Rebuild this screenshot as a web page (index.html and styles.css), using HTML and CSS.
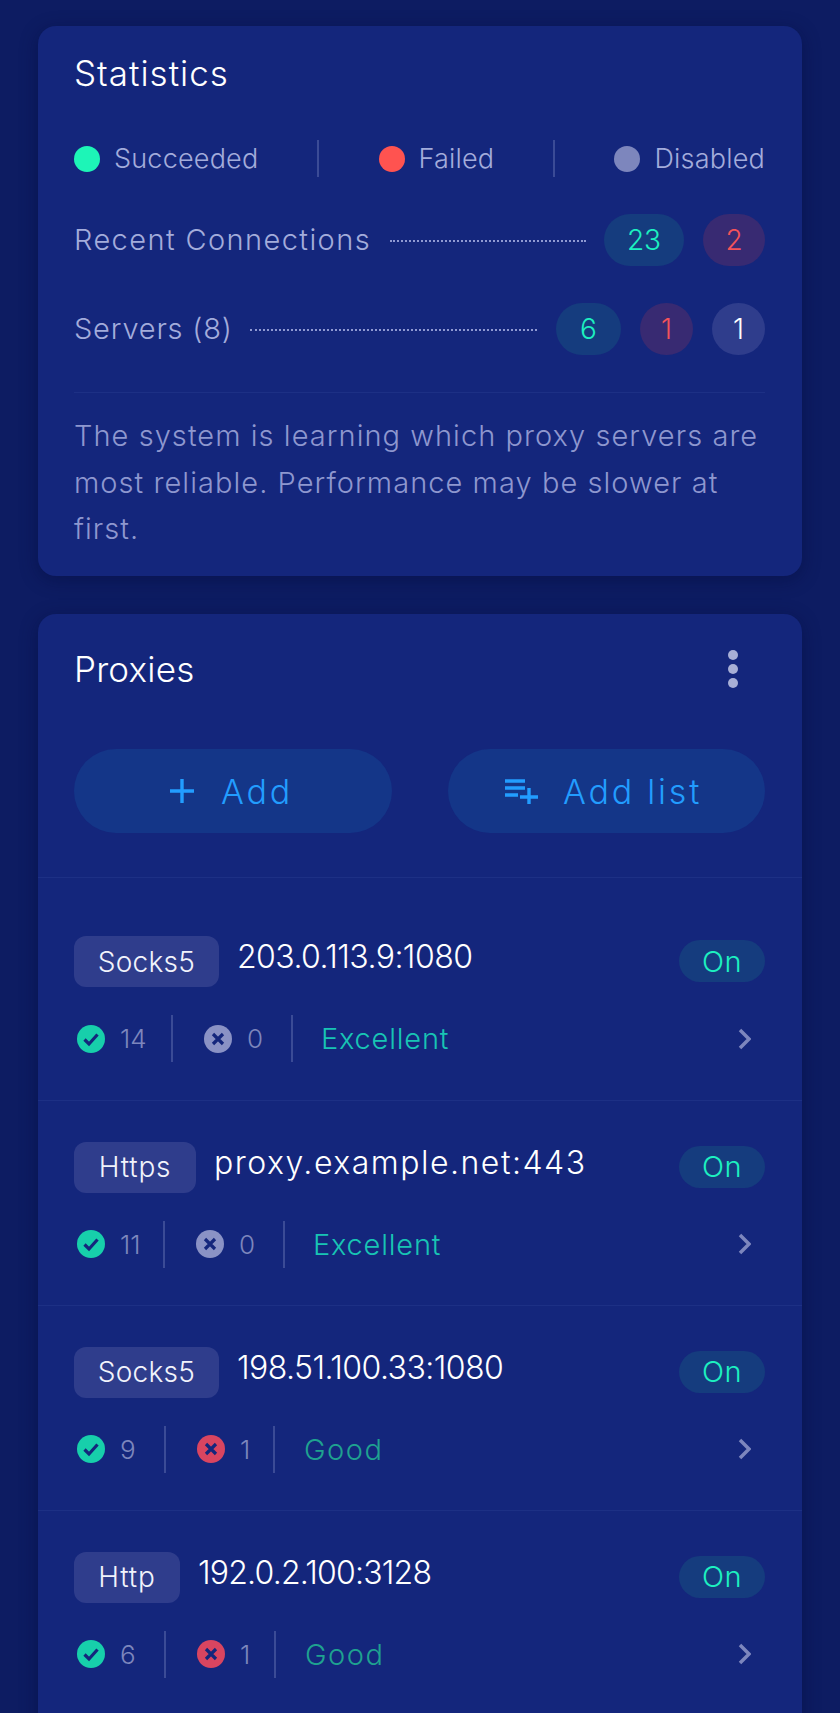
FILE: index.html
```html
<!DOCTYPE html>
<html lang="en">
<head>
<meta charset="utf-8">
<title>Proxies</title>
<link rel="stylesheet" href="styles.css">
</head>
<body>
<main class="page">
  <section class="card stats">
    <h2 class="title">Statistics</h2>
    <div class="legend">
      <span class="legend-item"><i class="dot dot-ok"></i>Succeeded</span>
      <span class="vsep"></span>
      <span class="legend-item"><i class="dot dot-fail"></i>Failed</span>
      <span class="vsep"></span>
      <span class="legend-item"><i class="dot dot-off"></i>Disabled</span>
    </div>
    <div class="stat-row stat-first">
      <span class="stat-label">Recent Connections</span>
      <span class="leader"></span>
      <span class="count count-ok wide">23</span>
      <span class="count count-fail">2</span>
    </div>
    <div class="stat-row stat-second">
      <span class="stat-label label-short">Servers (8)</span>
      <span class="leader"></span>
      <span class="count count-ok mid">6</span>
      <span class="count count-fail narrow">1</span>
      <span class="count count-off narrow">1</span>
    </div>
    <p class="note">The system is learning which proxy servers are most reliable. Performance may be slower at first.</p>
  </section>

  <section class="card proxies">
    <div class="proxies-head">
      <h2 class="title title-short">Proxies</h2>
      <svg class="kebab" width="10" height="38" viewBox="0 0 10 38"><circle cx="5" cy="5" r="5"/><circle cx="5" cy="19" r="5"/><circle cx="5" cy="33" r="5"/></svg>
    </div>
    <div class="actions">
      <button class="btn btn-add"><svg width="26" height="26" viewBox="0 0 26 26"><path d="M13 1v24M1 13h24"/></svg><span>Add</span></button>
      <button class="btn btn-list"><svg width="34" height="26" viewBox="0 0 34 26"><path d="M0 3h20M0 10h20M0 17h13M15 19h18M24 10v16"/></svg><span>Add list</span></button>
    </div>
    <ul class="list">
      <li class="proxy">
        <div class="proxy-top"><span class="type t-socks">Socks5</span><span class="addr">203.0.113.9:1080</span><span class="on">On</span></div>
        <div class="proxy-bottom">
          <svg class="ic" viewBox="0 0 28 28"><circle class="ok" cx="14" cy="14" r="14"/><path d="M7.5 14.5l4.5 4.5 8.5-9.5"/></svg><span class="num w-14">14</span><span class="vsep2"></span>
          <svg class="ic" viewBox="0 0 28 28"><circle class="off" cx="14" cy="14" r="14"/><path d="M9 9l10 10M19 9L9 19"/></svg><span class="num w-0">0</span><span class="vsep2"></span>
          <span class="rate excellent">Excellent</span><svg class="chev" viewBox="0 0 13 22"><path d="M2 2l9 9-9 9"/></svg>
        </div>
      </li>
      <li class="proxy">
        <div class="proxy-top"><span class="type t-https">Https</span><span class="addr addr-host">proxy.example.net:443</span><span class="on">On</span></div>
        <div class="proxy-bottom">
          <svg class="ic" viewBox="0 0 28 28"><circle class="ok" cx="14" cy="14" r="14"/><path d="M7.5 14.5l4.5 4.5 8.5-9.5"/></svg><span class="num w-11">11</span><span class="vsep2"></span>
          <svg class="ic" viewBox="0 0 28 28"><circle class="off" cx="14" cy="14" r="14"/><path d="M9 9l10 10M19 9L9 19"/></svg><span class="num w-0">0</span><span class="vsep2"></span>
          <span class="rate excellent">Excellent</span><svg class="chev" viewBox="0 0 13 22"><path d="M2 2l9 9-9 9"/></svg>
        </div>
      </li>
      <li class="proxy">
        <div class="proxy-top"><span class="type t-socks">Socks5</span><span class="addr">198.51.100.33:1080</span><span class="on">On</span></div>
        <div class="proxy-bottom">
          <svg class="ic" viewBox="0 0 28 28"><circle class="ok" cx="14" cy="14" r="14"/><path d="M7.5 14.5l4.5 4.5 8.5-9.5"/></svg><span class="num w-9">9</span><span class="vsep2"></span>
          <svg class="ic" viewBox="0 0 28 28"><circle class="bad" cx="14" cy="14" r="14"/><path d="M9 9l10 10M19 9L9 19"/></svg><span class="num w-1">1</span><span class="vsep2"></span>
          <span class="rate good">Good</span><svg class="chev" viewBox="0 0 13 22"><path d="M2 2l9 9-9 9"/></svg>
        </div>
      </li>
      <li class="proxy">
        <div class="proxy-top"><span class="type t-http">Http</span><span class="addr addr-tight">192.0.2.100:3128</span><span class="on">On</span></div>
        <div class="proxy-bottom">
          <svg class="ic" viewBox="0 0 28 28"><circle class="ok" cx="14" cy="14" r="14"/><path d="M7.5 14.5l4.5 4.5 8.5-9.5"/></svg><span class="num w-9">6</span><span class="vsep2"></span>
          <svg class="ic" viewBox="0 0 28 28"><circle class="bad" cx="14" cy="14" r="14"/><path d="M9 9l10 10M19 9L9 19"/></svg><span class="num w-1b">1</span><span class="vsep2"></span>
          <span class="rate good">Good</span><svg class="chev" viewBox="0 0 13 22"><path d="M2 2l9 9-9 9"/></svg>
        </div>
      </li>
    </ul>
  </section>
</main>
</body>
</html>
```
FILE: styles.css
```css
* { box-sizing: border-box; }
html, body { margin: 0; height: 1713px; overflow: hidden; }
body {
  background: #0d1c62;
  font-family: Inter, "Liberation Sans", sans-serif;
  font-weight: 300;
}
.page { padding: 26px 38px 0; display: flex; flex-direction: column; gap: 38px; }
.card {
  background: #14267c;
  border-radius: 18px;
  box-shadow: 0 4px 18px rgba(5, 12, 60, .45);
}
.stats { padding: 0 37px 23px 36px; }
.title { margin: 0; font-size: 35px; font-weight: 300; color: #fff; line-height: 46px; letter-spacing: 1px; }
.title-short { letter-spacing: .2px; }
.stats .title { padding-top: 24px; height: 70px; }
.legend { display: flex; justify-content: space-between; align-items: center; height: 37px; margin-top: 44px; font-size: 27px; color: #a3acdb; letter-spacing: .2px; }
.legend-item { display: flex; align-items: center; gap: 14px; }
.dot { width: 26px; height: 26px; border-radius: 50%; display: block; }
.dot-ok { background: #1df5b7; }
.dot-fail { background: #ff5350; }
.dot-off { background: #7d86bd; }
.vsep { width: 2px; height: 37px; background: #3b4b96; }
.stat-row { display: flex; align-items: center; height: 52px; gap: 19px; }
.stat-first { margin-top: 37px; }
.stat-second { margin-top: 37px; }
.stat-label { font-size: 29px; line-height: 50px; color: #a3acdb; white-space: nowrap; letter-spacing: 1.4px; }
.label-short { letter-spacing: .8px; margin-right: -2px; }
.leader { flex: 1; border-top: 2px dotted #8f99d2; margin: 2px 0 0; }
.count { height: 52px; border-radius: 26px; display: flex; align-items: center; justify-content: center; font-size: 28px; width: 62px; flex: none; }
.wide { width: 80px; margin-left: -1px; }
.mid { width: 65px; }
.narrow { width: 53px; }
.count-ok { background: #153c7e; color: #1df0c0; }
.count-fail { background: #382a72; color: #f3535a; }
.count-off { background: #2f3d8c; color: #fff; }
.note { margin: 37px 0 0; padding-top: 20px; border-top: 1px solid #1d3085; font-size: 29px; line-height: 46.7px; color: #8e97cf; letter-spacing: 1.05px; }

.proxies { height: 1200px; }
.proxies-head { display: flex; justify-content: space-between; align-items: center; padding: 32px 64px 0 36px; }
.kebab { fill: #a8afd6; }
.actions { display: flex; justify-content: space-between; padding: 57px 37px 44px 36px; }
.btn { width: 318px; height: 84px; border: 0; border-radius: 42px; background: #143688; color: #229dff; font-family: inherit; font-weight: 300; font-size: 34px; letter-spacing: 2.8px; display: flex; align-items: center; justify-content: center; gap: 24px; padding: 0; }
.btn-add { gap: 26px; padding-right: 4px; }
.btn-list { width: 317px; padding-right: 6px; }
.btn svg { fill: none; stroke: #229dff; stroke-width: 3.4; }
.list { list-style: none; margin: 0; padding: 17px 0 0; border-top: 1px solid #1d3085; }
.proxy { height: 205px; padding: 41px 37px 0 36px; border-top: 1px solid #1d3085; }
.proxy:first-child { border-top: 0; height: 204.5px; }
.proxy-top { display: flex; align-items: flex-start; }
.type { height: 51px; border-radius: 12px; background: #2f3d8c; color: #f1f3fb; font-size: 28px; letter-spacing: .8px; display: flex; align-items: center; justify-content: center; flex: none; margin-right: 18px; }
.t-socks { width: 145px; letter-spacing: .3px; }
.t-https { width: 122px; }
.t-http { width: 106px; }
.addr { color: #fff; font-size: 32px; line-height: 42px; letter-spacing: -.55px; font-weight: 300; flex: 1; white-space: nowrap; }
.addr-host { letter-spacing: 1.5px; }
.addr-tight { letter-spacing: -.8px; }
.on { width: 86px; height: 42px; border-radius: 21px; background: #153c7e; color: #1df0c0; font-size: 29px; letter-spacing: .5px; display: flex; align-items: center; justify-content: center; margin-top: 4px; }
.proxy-bottom { display: flex; align-items: center; height: 47px; margin-top: 28px; color: #7d86bd; font-size: 26px; padding-left: 3px; }
.ic { width: 28px; height: 28px; flex: none; }
.ic path { fill: none; stroke: #14267c; stroke-width: 3.2; }
.ic .ok { fill: #17cfab; }
.ic .off { fill: #8a92c5; }
.ic .bad { fill: #d94560; }
.num { margin-left: 15px; }
.w-14 { width: 51px; }
.w-0 { width: 44px; }
.w-11 { width: 43px; }
.w-9 { width: 44px; }
.w-1 { width: 33px; }
.w-1b { width: 34px; }
.vsep2 { width: 2px; height: 47px; background: #3b4b96; margin-right: 31px; flex: none; }
.rate { font-size: 29px; flex: 1; letter-spacing: .8px; margin-left: -3px; }
.excellent { color: #18c4b4; }
.good { color: #1fa290; margin-left: -2px; letter-spacing: 1.5px; }
.chev { width: 13px; height: 22px; margin-right: 14px; }
.chev path { fill: none; stroke: #7d86bd; stroke-width: 3.5; }
```
